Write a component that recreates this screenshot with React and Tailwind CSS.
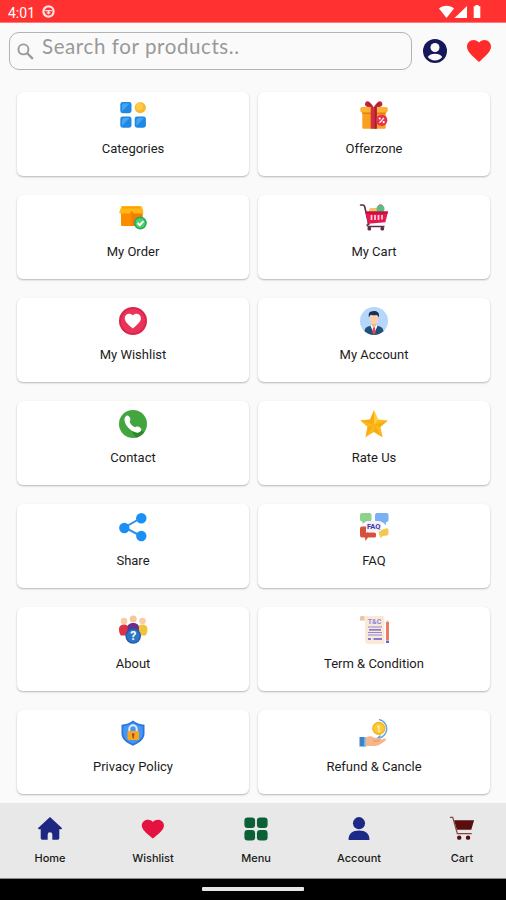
import React from 'react';

function Icon({ children }) {
  return (
    <svg viewBox="0 0 28 28" className="h-7 w-7 overflow-visible" fill="none">
      {children}
    </svg>
  );
}

const HEART = 'M12 21.35l-1.45-1.32C5.4 15.36 2 12.28 2 8.5 2 5.42 4.42 3 7.5 3c1.74 0 3.41.81 4.5 2.09C13.09 3.81 14.76 3 16.5 3 19.58 3 22 5.42 22 8.5c0 3.78-3.4 6.86-8.55 11.54L12 21.35z';

const CategoriesIcon = () => (
  <Icon>
    <rect x="1.3" y="1" width="11.2" height="11.2" rx="2.4" fill="#1e88e5" />
    <path d="M3 10.5 10.5 2.5H4.5L3 4z" fill="#42a5f5" />
    <circle cx="21.3" cy="6.6" r="5.6" fill="#f9b92c" />
    <circle cx="20.5" cy="5.6" r="3.6" fill="#ffca4a" />
    <rect x="1.3" y="15.5" width="11.2" height="11.2" rx="2.4" fill="#1e88e5" />
    <path d="M3 25 10.5 17H4.5L3 18.5z" fill="#42a5f5" />
    <rect x="15.7" y="15.5" width="11.2" height="11.2" rx="2.4" fill="#1e88e5" />
    <path d="M17.4 25 25 17h-6l-1.6 1.5z" fill="#42a5f5" />
  </Icon>
);

const OfferIcon = () => (
  <Icon>
    <path d="M13.7 6.5C9 6.5 5 6 5 3.2 5 0 8-.6 10 1.5c1.6 1.5 3 3.5 3.7 5zM13.7 6.5c4.7 0 8.7-.5 8.7-3.3 0-3.2-3-3.8-5-1.7-1.6 1.5-3 3.5-3.7 5z" fill="#c6283b" />
    <path d="M7 3.5c1-1.5 3-.5 4 1.5M20.500 3.500c-1-1.500-3-.5-4 1.500" stroke="#8e1a2b" />
    <rect x="2.3" y="9" width="23.4" height="18.7" rx="1" fill="#f9a01f" />
    <path d="M2.3 11h23.4v2H2.3z" fill="#e07f16" />
    <rect x=".3" y="6" width="27.4" height="5.4" rx="1.5" fill="#fbb331" />
    <path d="M10.7 6h6v21.7h-6z" fill="#d32d40" />
    <path d="M14.7 6h2v21.7h-2z" fill="#a61e32" />
    <circle cx="21.7" cy="19.3" r="5.7" fill="#e5344c" />
    <path d="m19.5 21.8 4.4-5" stroke="#fff" strokeWidth="1.2" />
    <circle cx="19.7" cy="17.5" r="1.1" fill="#fff" />
    <circle cx="23.7" cy="21.1" r="1.1" fill="#fff" />
  </Icon>
);

const OrderIcon = () => (
  <Icon>
    <path d="M2 5h21.5v16a1 1 0 0 1-1 1H3a1 1 0 0 1-1-1z" fill="#fb8c00" />
    <path d="M12.5 5h11v17h-11z" fill="#f57c00" />
    <path d="M2.5 2h10v5l-2 2.5H1.3a1 1 0 0 1-1-1.3zM12.5 2h10l2 6.2a1 1 0 0 1-1 1.3h-8.500l-2.500-2.500z" fill="#ffb818" />
    <path d="M4 3h17l.5 1.5h-18z" fill="#ffa000" />
    <circle cx="21.3" cy="19" r="6.5" fill="#27ae55" />
    <circle cx="21.3" cy="19" r="4.8" fill="#52cf75" />
    <path d="m18.5 19 2.2 2.1 3.8-4" stroke="#fff" strokeWidth="1.9" />
  </Icon>
);

const CartIcon = () => (
  <Icon>
    <rect x="9" y="4" width="9" height="6" rx="2" fill="#eec26a" />
    <circle cx="20.5" cy="5" r="4" fill="#55bf85" />
    <path d="M18.5 1.5c1-1 3-1 4 0" stroke="#d94c5c" />
    <path d="M.5 1h2.2c1.2 0 1.7.6 2 1.7L8.8 20.5" stroke="#5c2b48" strokeWidth="1.6" strokeLinecap="round" />
    <path d="M5.3 7.5H28l-2.6 10.8L8 19.7z" fill="#e5184f" />
    <path d="M5.3 7.5H28l-.5 2.3H6z" fill="#c4103f" />
    <path d="M11.5 11v5M15 11v5M18.5 11v5M22 11v4.5" stroke="#ffd3df" strokeWidth="1.7" />
    <path d="M8.5 19.5c-2.5 1-1.5 3 .5 3h15.5" stroke="#5c2b48" strokeWidth="1.3" />
    <circle cx="9.3" cy="24.7" r="1.9" fill="#5c2b48" />
    <circle cx="22.3" cy="24.7" r="1.9" fill="#5c2b48" />
  </Icon>
);

const WishlistIcon = () => (
  <Icon>
    <circle cx="14" cy="14" r="14" fill="#d9264c" />
    <circle cx="14" cy="14" r="12" fill="#ea3358" />
    <path transform="translate(4.1 4.3) scale(.81)" d={HEART} fill="#fff" />
  </Icon>
);

const AccountIcon = () => (
  <Icon>
    <circle cx="14" cy="14" r="14" fill="#b5d7fb" />
    <path d="M4.5 24.3c.5-4 2.5-5 9.5-6 7 1 9 2 9.5 6A14 14 0 0 1 14 28a14 14 0 0 1-9.5-3.7z" fill="#22507b" />
    <path d="M10.5 18.8 14 17l3.5 1.8L14 27z" fill="#fff" />
    <path d="M12 14.5h4V19l-2 1.5-2-1.5z" fill="#eeb793" />
    <ellipse cx="14" cy="11.5" rx="4.5" ry="5.5" fill="#fbd0ae" />
    <path d="M9 10.5C8 6 10 4 12 4.5c2-1 7-.5 7 3.5 0 1-.2 1.8-.6 2.6-.4-1.6-1-2.3-1.9-2.6-2 .5-4 .5-5.500-.2C10 8.300 9.500 9 9 10.500z" fill="#18324f" />
    <path d="M13.2 20.3h1.6l.9 5.2L14 28l-1.7-2.5z" fill="#dd4653" />
  </Icon>
);

const ContactIcon = () => (
  <Icon>
    <circle cx="14" cy="14" r="14" fill="#43a53d" />
    <path d="m20 18 5 4.5A14 14 0 0 1 17 27.7L13 22z" fill="#27782b" opacity=".7" />
    <path d="M7.2 5.9c1.6-1 3.4.6 4.1 2.7.6 1.7-.9 2.500-.4 3.600.8 2 2.300 3.700 4.500 4.800 1.200.6 1.900-1 3.400-.5 2.600.8 4.400 2.200 3.300 4.100-1.100 2-3.800 2.600-6.300 1.500C10.600 19.800 7 16 5.700 11.400c-.6-2.200-.2-4.500 1.500-5.500z" fill="#fff" />
  </Icon>
);

const StarIcon = () => (
  <Icon>
    <path d="m14 .3 4 9.200 9.800.9-7.400 6.700 2.300 10.200-8.700-5.200-8.500 5.200 2-10.200L.2 10.400l9.800-.9z" fill="#fdbb1b" />
    <path d="M14 .3V15L10 9.500zM27.800 10.400 14 15l6.400 2.100zM22.700 27.300 14 15v7.100zM5.500 27.300 14 15l-6.500 2.100zM.2 10.400 14 15l-4-5.500z" fill="#f3a010" opacity=".6" />
    <path d="M14 .3 18 9.500 14 15z" fill="#ffd338" />
  </Icon>
);

const ShareIcon = () => (
  <Icon>
    <path d="M22 5 5.5 14.5 22 23" stroke="#2f8fe8" strokeWidth="2" />
    <circle cx="22.3" cy="5.3" r="5.2" fill="#1a8ff5" />
    <circle cx="5.3" cy="15" r="5.2" fill="#1a8ff5" />
    <circle cx="22.3" cy="23" r="5.2" fill="#1a8ff5" />
  </Icon>
);

const FaqIcon = () => (
  <Icon>
    <path d="M2 0h7.5a2 2 0 0 1 2 2v4.500a2 2 0 0 1-2 2H6L2.500 11V8.500H2a2 2 0 0 1-2-2V2a2 2 0 0 1 2-2z" fill="#8fd18c" />
    <path d="M17 0h9.500a2 2 0 0 1 2 2v5a2 2 0 0 1-2 2H26v3l-4-3h-5a2 2 0 0 1-2-2V2a2 2 0 0 1 2-2z" fill="#79b1f2" />
    <path d="M2 13.500h6v6h6.500a1.500 1.500 0 0 1 1.500 1.500v2a1.500 1.500 0 0 1-1.500 1.500H8L5.500 28l-.5-3.500H2a2 2 0 0 1-2-2v-7a2 2 0 0 1 2-2z" fill="#d6503e" />
    <path d="M20.500 17 26 15.500a2 2 0 0 1 2.500 1.500v3.500a2 2 0 0 1-1.500 2l-4 .5-3 2-.5-3c-1.500-2-1-4.500 1-5z" fill="#f3c84e" />
    <path d="M6 8h13.500a2 2 0 0 1 2 2v6.500a2 2 0 0 1-2 2H9L6 20z" fill="#f1effb" />
    <text x="13.7" y="16" textAnchor="middle" fontFamily="Roboto, sans-serif" fontWeight="700" fontSize="7.5" fill="#4336a3">FAQ</text>
  </Icon>
);

const AboutIcon = () => (
  <Icon>
    <circle cx="5" cy="5" r="3.3" fill="#f7cda5" />
    <circle cx="23.5" cy="5" r="3.3" fill="#f7cda5" />
    <path d="M0 13c0-3 2-4.500 5-4.500s5 1.500 5 4.500v6.500H2C.5 18 0 15 0 13z" fill="#df3145" />
    <path d="M18.500 13c0-3 2-4.500 5-4.500s5 1.500 5 4.500c0 2-.5 5-2 6.500h-8z" fill="#eec43b" />
    <circle cx="14.2" cy="3" r="3.5" fill="#f7c69b" />
    <path d="M8.500 15v-3.500c0-3 2.200-4.500 5.700-4.500s5.700 1.500 5.700 4.500V15z" fill="#69308c" />
    <circle cx="14.2" cy="20" r="7.8" fill="#1d5daa" />
    <circle cx="14.2" cy="20" r="6.5" fill="#2d76c7" />
    <text x="14.2" y="24.3" textAnchor="middle" fontFamily="Roboto, sans-serif" fontWeight="700" fontSize="12" fill="#fff">?</text>
  </Icon>
);

const TermsIcon = () => (
  <Icon>
    <path d="M2 0h20.500a2 2 0 0 1 2 2v26h-17a3 3 0 0 1-2.500-3V4.500H0V2a2 2 0 0 1 2-2z" fill="#fbe9d8" />
    <path d="M0 4.500V2a2 2 0 0 1 4.500 0v2.500z" fill="#e9c6a3" />
    <text x="14.5" y="7.7" textAnchor="middle" fontFamily="Roboto, sans-serif" fontWeight="700" fontSize="7" fill="#8b86dc">T&amp;C</text>
    <path d="M8 11h14M8 16.500h14M8 19h14" stroke="#8d86dd" strokeWidth="1.2" />
    <path d="M9 13.800h12M8 23h3M13.500 23H22" stroke="#6059cd" strokeWidth="1.3" />
    <path d="M26 6h3v18h-3z" fill="#ed7b63" />
    <path d="m26 6 1.500-2.500L29 6z" fill="#f6c8a9" />
    <path d="M26 24.500h3V27h-3z" fill="#5669cd" />
  </Icon>
);

const PrivacyIcon = () => (
  <Icon>
    <path d="M14 1.500c3.500 2.500 6.500 3.800 11.500 4.300v9c0 5-4.500 9-11.500 12-7-3-11.500-7-11.500-12v-9C7.500 5.300 10.500 4 14 1.500z" fill="#2676de" />
    <path d="M14 3.500c3 2 6 3.200 9.700 3.700v7.500c0 4-3.700 7.400-9.700 10.100-6-2.700-9.700-6.100-9.700-10.100V7.200C8 6.700 11 5.500 14 3.500z" fill="#4796f2" />
    <path d="M10.300 14v-4a3.700 3.700 0 0 1 7.400 0v4" stroke="#dfecf8" strokeWidth="2" />
    <rect x="8.5" y="12" width="11.5" height="9" rx="1" fill="#f8a51f" />
    <circle cx="14.2" cy="15.5" r="1.3" fill="#875018" />
    <path d="M13.500 16h1.400v3.200h-1.400z" fill="#875018" />
  </Icon>
);

const RefundIcon = () => (
  <Icon>
    <path d="M19 .5A9.400 9.400 0 0 1 19 19" stroke="#68a5da" strokeWidth="1.5" />
    <path d="m20.500 16.500-3 2.700 3.200 1.800" stroke="#68a5da" strokeWidth="1.3" />
    <circle cx="18.8" cy="9.3" r="6.6" fill="#f4b71f" />
    <circle cx="18.8" cy="9.3" r="5" fill="#fbc93b" />
    <path d="M17 7.500h2v5M19 6.500v6M18 12.500h2.500" stroke="#fff0a8" strokeWidth="1.3" />
    <path d="M6 18.500c3-2 6-1.500 8.500.3l4.500.4c1.500.2 1.500 1.800 0 2l5-1.500c2-.8 3 .8 1.500 1.800-3 2.300-6.500 5.500-10.500 5.500H6z" fill="#f7b58b" />
    <path d="M13 22h5.500l1-.8" stroke="#e39368" />
    <path d="M-.5 18H6v9.500H-.5z" fill="#3a83c4" />
    <path d="M4.200 18H6v9.500H4.200z" fill="#8dbce4" />
  </Icon>
);

const menu = [
  { label: 'Categories', icon: CategoriesIcon },
  { label: 'Offerzone', icon: OfferIcon },
  { label: 'My Order', icon: OrderIcon },
  { label: 'My Cart', icon: CartIcon },
  { label: 'My Wishlist', icon: WishlistIcon },
  { label: 'My Account', icon: AccountIcon },
  { label: 'Contact', icon: ContactIcon },
  { label: 'Rate Us', icon: StarIcon },
  { label: 'Share', icon: ShareIcon },
  { label: 'FAQ', icon: FaqIcon },
  { label: 'About', icon: AboutIcon },
  { label: 'Term & Condition', icon: TermsIcon },
  { label: 'Privacy Policy', icon: PrivacyIcon },
  { label: 'Refund & Cancle', icon: RefundIcon },
];

const tabs = [
  {
    label: 'Home',
    icon: <path d="M14 1 1.500 12.700c-.8.8-.3 1.500.5 1.500h2V24a1.600 1.600 0 0 0 1.600 1.600h5.900V20a2.500 2.500 0 0 1 5 0v5.600h5.900A1.600 1.600 0 0 0 24 24v-9.800h2c.8 0 1.300-.7.500-1.500z" fill="#1e2882" />,
  },
  {
    label: 'Wishlist',
    icon: <path transform="translate(-.4 .8) scale(1.19 1.1)" d={HEART} fill="#e5123f" />,
  },
  {
    label: 'Menu',
    icon: (
      <g fill="#0b6035">
        <rect x="1.5" y="1.500" width="11.500" height="11.500" rx="3.500" />
        <rect x="15" y="1.500" width="11.500" height="11.500" rx="3.500" />
        <rect x="1.5" y="15" width="11.500" height="11.500" rx="3.500" />
        <rect x="15" y="15" width="11.500" height="11.500" rx="3.500" />
      </g>
    ),
  },
  {
    label: 'Account',
    icon: (
      <g fill="#1c2a87">
        <circle cx="14" cy="7.7" r="6.5" />
        <path d="M2.800 25.900v-1.500c0-5.200 4.200-8.900 11.200-8.900s11.200 3.700 11.200 8.900v1.500z" />
      </g>
    ),
  },
  {
    label: 'Cart',
    icon: (
      <g>
        <path d="M1 1.500h3l5 17.500h15.500" stroke="#7a4a48" strokeWidth="1.3" />
        <path d="M5.500 4.500H27l-3 10.300H8.500z" fill="#590d0d" />
        <circle cx="11" cy="23.3" r="2.4" fill="#590d0d" />
        <circle cx="20.5" cy="23.3" r="2.4" fill="#590d0d" />
      </g>
    ),
  },
];

function StatusBar() {
  return (
    <header className="flex h-[23px] shrink-0 items-center justify-between border-b border-[#ff7a7a] bg-[#ff3131] pl-2 pr-6 pt-px text-white">
      <div className="flex items-center gap-[7px]">
        <span className="mt-[3px] font-['Roboto',sans-serif] text-[14px] leading-none">4:01</span>
        <svg viewBox="0 0 14 14" className="h-[13px] w-[13px]" fill="none">
          <circle cx="7" cy="7" r="5.5" stroke="#ffe3e3" strokeWidth="2.4" />
          <path d="M3.500 6h7M7 6v4M5 8.500h4" stroke="#ffe3e3" strokeWidth="1.5" />
        </svg>
      </div>
      <svg viewBox="0 0 43 14" className="h-[14px] w-[43px]" fill="#fff">
        <path d="M0 3.500C4-.3 11-.3 15 3.500L7.500 13z" />
        <path d="M28 1v12H15.500z" />
        <path d="M36.500 0h3v1.300h1.800V13h-6.600V1.300h1.800z" />
      </svg>
    </header>
  );
}

function SearchRow() {
  return (
    <div className="flex items-center pl-[9px] pr-[14px] pt-[9px]">
      <div className="flex h-[38px] w-[403px] items-center rounded-[10px] border border-[#b3b3b3] pl-[7px]">
        <svg viewBox="0 0 18 18" className="h-[17px] w-[17px]" fill="none" stroke="#999">
          <circle cx="6.8" cy="6.8" r="5.3" strokeWidth="2" />
          <path d="m10.800 10.800 6 6" strokeWidth="2.4" />
        </svg>
        <span className="-mt-[9px] ml-2 whitespace-nowrap font-['Lato',sans-serif] text-[20.5px] leading-none tracking-[0.6px] text-[#999]">
          Search for products..
        </span>
      </div>
      <svg viewBox="0 0 24 24" className="ml-[11px] h-6 w-6">
        <circle cx="12" cy="12" r="12" fill="#15175b" />
        <circle cx="12" cy="8.5" r="4.5" fill="#fafafa" />
        <path d="M4.800 18c1.500-2.500 4-3.300 7.200-3.300s5.700.8 7.200 3.300c-1.700 2.300-4.200 3.500-7.200 3.500S6.500 20.300 4.800 18z" fill="#fafafa" />
      </svg>
      <svg viewBox="2 3 20 18.350" preserveAspectRatio="none" className="ml-5 h-[22px] w-6">
        <path d={HEART} fill="#ff2b2b" />
      </svg>
    </div>
  );
}

export default function App() {
  return (
    <div className="flex h-[900px] w-[506px] flex-col overflow-hidden bg-[#fafafa]">
      <StatusBar />
      <SearchRow />

      <main className="grid grid-cols-2 gap-x-[9px] gap-y-[19px] pl-[17px] pr-4 pt-[22px]">
        {menu.map(({ label, icon: MenuIcon }) => (
          <div
            key={label}
            className="flex h-[84px] flex-col items-center rounded-md bg-white pt-[9px] shadow-[0_1px_2px_rgba(0,0,0,0.28)]"
          >
            <MenuIcon />
            <span className="mt-3 font-['Roboto',sans-serif] text-[13px] leading-[15px] text-[#1c1c1c]">
              {label}
            </span>
          </div>
        ))}
      </main>

      <nav className="mt-auto flex h-[76px] shrink-0 justify-center border-b border-[#8a8a8a] bg-[#e8e8e8] pl-1.5 pt-[13px]">
        {tabs.map((tab) => (
          <div key={tab.label} className="flex w-[103px] shrink-0 flex-col items-center">
            <svg viewBox="0 0 28 28" className="h-[26px] w-[26px]" fill="none">
              {tab.icon}
            </svg>
            <span className="mt-[9px] font-['Inter',sans-serif] text-[11px] font-medium leading-[14px] text-[#1a1a1a]">
              {tab.label}
            </span>
          </div>
        ))}
      </nav>

      <footer className="flex h-[21px] shrink-0 justify-center bg-black pt-2">
        <div className="h-1 w-[102px] rounded-[1px] bg-[#e6e6e6]" />
      </footer>
    </div>
  );
}
